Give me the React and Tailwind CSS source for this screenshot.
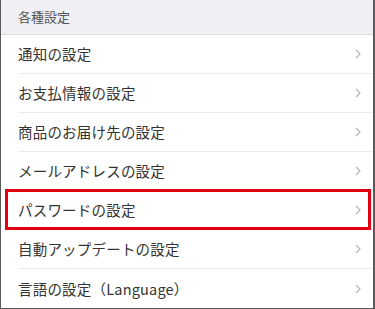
import React from "react";

const items = [
  "通知の設定",
  "お支払情報の設定",
  "商品のお届け先の設定",
  "メールアドレスの設定",
  "パスワードの設定",
  "自動アップデートの設定",
  "言語の設定（Language）",
];

function Chevron() {
  return (
    <svg width="6" height="10" viewBox="0 0 6 10" className="shrink-0">
      <path d="M1 1l4 4-4 4" fill="none" stroke="#b8b8b8" strokeWidth="1.3" />
    </svg>
  );
}

export default function App() {
  return (
    <div
      className="w-[375px] h-[309px] bg-white border-l border-r-2 border-b border-[#5a5a5a] flex flex-col overflow-hidden"
      style={{ fontFamily: '"Noto Sans CJK JP", "Noto Sans", sans-serif' }}
    >
      <div className="h-[35px] shrink-0 bg-[#efeff4] border-b border-[#dcdce0] flex items-center pl-[17px] text-[13px] text-[#555]">
        各種設定
      </div>
      {items.map((t, i) => (
        <div key={t} className="relative h-[39px] shrink-0 pl-[17px]">
          <div
            className={
              "h-full flex items-center justify-between pr-[12px] " +
              (i < items.length - 1 ? "border-b border-[#ececec]" : "")
            }
          >
            <span className="text-[14.5px] text-[#333] tracking-[0.2px]">{t}</span>
            <Chevron />
          </div>
          {i === 4 && (
            <div className="absolute left-[4px] right-[2px] top-[-2px] bottom-[0px] border-[3px] border-[#e0000f] pointer-events-none" />
          )}
        </div>
      ))}
    </div>
  );
}
